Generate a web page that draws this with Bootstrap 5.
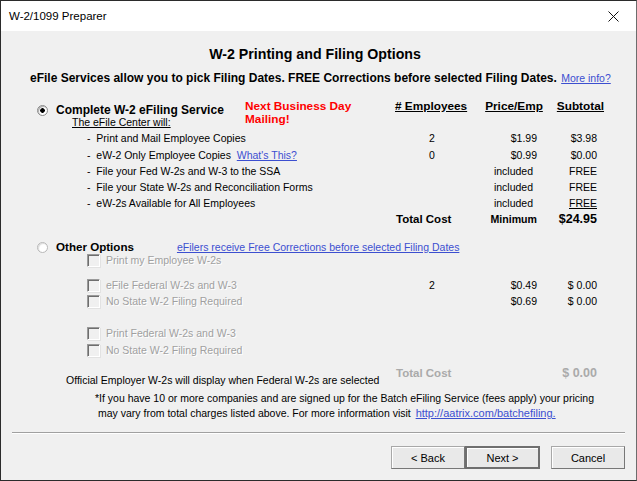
<!DOCTYPE html>
<html lang="en">
<head>
<meta charset="UTF-8">
<title>W-2/1099 Preparer</title>
<link rel="stylesheet" href="https://cdn.jsdelivr.net/npm/bootstrap@5.3.0/dist/css/bootstrap.min.css">
<style>
html, body { height: 100%; }
body { background: #f0f0f0; color: #000; font-family: "Liberation Sans", Arial, sans-serif; font-size: 10.5px; line-height: 16px; overflow: hidden; }
.win-frame { width: 637px; height: 481px; border: 1px solid #2b2b2b; border-right-color: #6d6d6d; background: #f0f0f0; }
.win-title { height: 30px; background: #fff; font-size: 11.5px; padding-left: 8px; }
.win-close { width: 46px; height: 30px; }
.dlg-body { height: 449px; }
.dlg-head { font-size: 14.2px; font-weight: 700; height: 20px; line-height: 20px; margin-top: 13px; padding-right: 7px; }
.dlg-sub { font-weight: 700; font-size: 12px; height: 16px; margin-top: 6px; padding-left: 29px; white-space: nowrap; }
a { color: #3c4fd0; }
.more-link { font-weight: 400; font-size: 10.5px; margin-left: 1px; }
.opt-line { display: flex; height: 16px; align-items: center; white-space: nowrap; }
.opt-label { width: 401px; flex: none; padding-left: 86px; }
.opt-emp { width: 60px; flex: none; text-align: center; }
.opt-price { width: 75px; flex: none; text-align: right; }
.opt-sub { width: 60px; flex: none; text-align: right; }
.opt-inc { padding-right: 4px; }
.opt-main { font-weight: 700; font-size: 12px; }
.opt-tot { text-align: left; margin-left: -6px; width: 66px; font-size: 11.5px; }
.opt-min { font-size: 10.6px; }
.opt-big { font-size: 12.5px; }
.win-radio { appearance: none; width: 11px; height: 11px; border: 1px solid #8a8a8a; border-radius: 50%; background: #fff; margin: 0 8px 0 0; box-shadow: inset 1px 1px 1px #aaa; flex: none; }
.win-radio:checked { background: radial-gradient(circle, #000 0 2px, #fff 2.6px); }
.win-radio:disabled { border-color: #b8b8b8; box-shadow: inset 1px 1px 1px #ddd; }
.head-top { display: flex; margin-top: 10px; height: 28px; }
.head-left { width: 244px; flex: none; padding: 6px 0 0 36px; }
.head-left .win-radio { margin-top: 3px; }
.head-red { width: 150px; flex: none; color: #f00; font-weight: 700; font-size: 11.8px; line-height: 13px; white-space: nowrap; padding-top: 4px; }
.head-cols { display: flex; font-weight: 700; font-size: 11.8px; text-decoration: underline; white-space: nowrap; padding-top: 2px; }
.head-price { margin-left: 18px; }
.head-total { margin-left: 14px; }
.efile-will { margin: -10px 0 0 71px; text-decoration: underline; height: 16px; }
.dis-check { appearance: none; width: 13px; height: 13px; flex: none; margin: 0 6px 0 0; background: #f0f0f0; border: 1px solid #fff; border-top-color: #9a9a9a; border-left-color: #9a9a9a; box-shadow: inset 1px 1px 0 #6e6e6e, 1px 1px 0 #e2e2e2; }
.dis-text { color: #a0a0a0; text-shadow: 1px 1px 0 #fff; }
.other-row { margin-top: 12px; margin-bottom: -3px; height: 16px; padding-left: 36px; font-size: 11.6px; }
.other-row a { margin-left: 43px; font-weight: 400; font-size: 10.5px; }
.gap-one { margin-top: 1px; }
.gap-a { margin-top: 9px; }
.gap-b { margin-top: 16px; }
.foot-note { display: flex; height: 24px; margin-top: 6px; white-space: nowrap; padding-left: 65px; }
.foot-left { width: 336px; flex: none; align-self: flex-end; }
.tot-gray { color: #aaa; font-weight: 700; font-size: 11.5px; align-self: flex-start; padding-top: 1px; }
.tot-amt { font-size: 12.5px; }
.tiny-note { white-space: nowrap; line-height: 15px; margin-top: 3px; padding-left: 94px; }
.tiny-second { padding-left: 3px; }
.tiny-second a { font-size: 11px; margin-left: -1px; }
.win-rule { border: 0; border-top: 1px solid #a0a0a0; border-bottom: 1px solid #fff; opacity: 1; margin: 11px 11px 0 11px; height: 2px; }
.dlg-foot { margin: 12px 11px 0 0; }
.btn-win { background: #e9e9e9; color: #000; font-size: 11px; padding: 0; width: 74px; height: 23px; line-height: 20px; border-radius: 0; border: 1px solid #a8a8a8; border-right-color: #777; border-bottom-color: #777; box-shadow: inset 1px 1px 0 #fff; }
.btn-win-on { border: 2px solid #6f6f6f; width: 75px; }
.btn-win-last { margin-left: 11px; }
</style>
</head>
<body>
<div class="win-frame">
  <div class="win-title d-flex align-items-center justify-content-between">
    <span>W-2/1099 Preparer</span>
    <span class="win-close d-flex align-items-center justify-content-center">
      <svg width="11" height="11" viewBox="0 0 11 11"><path d="M.5.5l10 10M10.5.5l-10 10" stroke="#111" fill="none"/></svg>
    </span>
  </div>
  <div class="dlg-body">
    <div class="dlg-head text-center">W-2 Printing and Filing Options</div>
    <div class="dlg-sub">eFile Services allow you to pick Filing Dates. FREE Corrections before selected Filing Dates. <a class="more-link" href="#">More info?</a></div>

    <div class="head-top">
      <div class="head-left d-flex align-items-start opt-main"><input class="win-radio" type="radio" name="opt" checked><span>Complete W-2 eFiling Service</span></div>
      <div class="head-red">Next Business Day<br>Mailing!</div>
      <div class="head-cols">
        <span># Employees</span>
        <span class="head-price">Price/Emp</span>
        <span class="head-total">Subtotal</span>
      </div>
    </div>
    <div class="efile-will">The eFile Center will:</div>

    <div class="opt-line"><div class="opt-label">-&nbsp; Print and Mail Employee Copies</div><div class="opt-emp">2</div><div class="opt-price">$1.99</div><div class="opt-sub">$3.98</div></div>
    <div class="opt-line gap-one"><div class="opt-label">-&nbsp; eW-2 Only Employee Copies &nbsp;<a href="#">What's This?</a></div><div class="opt-emp">0</div><div class="opt-price">$0.99</div><div class="opt-sub">$0.00</div></div>
    <div class="opt-line"><div class="opt-label">-&nbsp; File your Fed W-2s and W-3 to the SSA</div><div class="opt-emp"></div><div class="opt-price opt-inc">included</div><div class="opt-sub">FREE</div></div>
    <div class="opt-line"><div class="opt-label">-&nbsp; File your State W-2s and Reconciliation Forms</div><div class="opt-emp"></div><div class="opt-price opt-inc">included</div><div class="opt-sub">FREE</div></div>
    <div class="opt-line"><div class="opt-label">-&nbsp; eW-2s Available for All Employees</div><div class="opt-emp"></div><div class="opt-price opt-inc">included</div><div class="opt-sub text-decoration-underline">FREE</div></div>
    <div class="opt-line opt-main"><div class="opt-label"></div><div class="opt-emp opt-tot">Total Cost</div><div class="opt-price opt-min">Minimum</div><div class="opt-sub opt-big">$24.95</div></div>

    <div class="other-row d-flex align-items-center opt-main"><input class="win-radio" type="radio" name="opt" disabled><span>Other Options</span><a href="#">eFilers receive Free Corrections before selected Filing Dates</a></div>

    <div class="opt-line"><div class="opt-label d-flex align-items-center"><input class="dis-check" type="checkbox" disabled><span class="dis-text">Print my Employee W-2s</span></div></div>
    <div class="opt-line gap-a"><div class="opt-label d-flex align-items-center"><input class="dis-check" type="checkbox" disabled><span class="dis-text">eFile Federal W-2s and W-3</span></div><div class="opt-emp">2</div><div class="opt-price">$0.49</div><div class="opt-sub">$ 0.00</div></div>
    <div class="opt-line"><div class="opt-label d-flex align-items-center"><input class="dis-check" type="checkbox" disabled><span class="dis-text">No State W-2 Filing Required</span></div><div class="opt-emp"></div><div class="opt-price">$0.69</div><div class="opt-sub">$ 0.00</div></div>
    <div class="opt-line gap-b"><div class="opt-label d-flex align-items-center"><input class="dis-check" type="checkbox" disabled><span class="dis-text">Print Federal W-2s and W-3</span></div></div>
    <div class="opt-line gap-one"><div class="opt-label d-flex align-items-center"><input class="dis-check" type="checkbox" disabled><span class="dis-text">No State W-2 Filing Required</span></div></div>

    <div class="foot-note">
      <span class="foot-left">Official Employer W-2s will display when Federal W-2s are selected</span>
      <span class="opt-emp tot-gray opt-tot">Total Cost</span>
      <span class="opt-price tot-gray"></span>
      <span class="opt-sub tot-gray tot-amt">$ 0.00</span>
    </div>
    <div class="tiny-note">
      <div>*If you have 10 or more companies and are signed up for the Batch eFiling Service (fees apply) your pricing</div>
      <div class="tiny-second">may vary from total charges listed above. For more information visit &nbsp;<a href="#">http://aatrix.com/batchefiling.</a></div>
    </div>

    <hr class="win-rule">
    <div class="dlg-foot d-flex justify-content-end">
      <button class="btn btn-win" type="button">&lt; Back</button>
      <button class="btn btn-win btn-win-on" type="button">Next &gt;</button>
      <button class="btn btn-win btn-win-last" type="button">Cancel</button>
    </div>
  </div>
</div>
<script src="https://cdn.jsdelivr.net/npm/bootstrap@5.3.0/dist/js/bootstrap.bundle.min.js"></script>
</body>
</html>
